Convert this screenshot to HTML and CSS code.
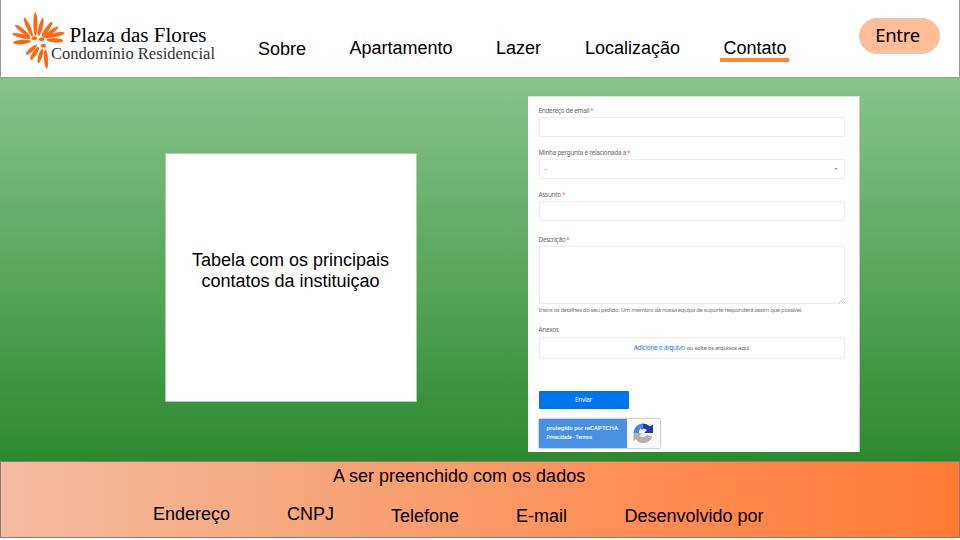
FILE: index.html
```html
<!DOCTYPE html>
<html lang="pt-BR">
<head>
<meta charset="utf-8">
<title>Plaza das Flores</title>
<link rel="stylesheet" href="styles.css">
</head>
<body>
<header class="header">
  <svg class="logo" width="220" height="76" viewBox="0 0 220 76" role="img" aria-label="Plaza das Flores">
    <g transform="scale(.33333)" fill="#fa6a14">
      <ellipse rx="36" ry="6" transform="translate(106 72) rotate(90)"/>
      <ellipse rx="31" ry="6" transform="translate(85 81) rotate(66)"/>
      <ellipse rx="29" ry="6" transform="translate(68 93) rotate(39)"/>
      <ellipse rx="28" ry="6" transform="translate(64 108) rotate(14)"/>
      <ellipse rx="27" ry="6.500" transform="translate(66 126) rotate(-4)"/>
      <ellipse rx="28" ry="6" transform="translate(122 81) rotate(-76)"/>
      <ellipse rx="27" ry="6" transform="translate(141 88) rotate(-55)"/>
      <ellipse rx="28" ry="6" transform="translate(152 97) rotate(-36)"/>
      <ellipse rx="31" ry="6.500" transform="translate(164 105) rotate(-12)"/>
      <ellipse rx="25" ry="6.500" transform="translate(165 121) rotate(3)"/>
      <ellipse rx="22" ry="6" transform="translate(94 149) rotate(-42)"/>
      <ellipse rx="23" ry="6" transform="translate(104 160) rotate(-57)"/>
      <ellipse rx="23" ry="6" transform="translate(121 168) rotate(-73)"/>
      <ellipse rx="29" ry="6" transform="translate(138 177) rotate(86)"/>
      <ellipse rx="8" ry="6" transform="translate(103 115)"/>
      <ellipse rx="8" ry="6" transform="translate(125 118)"/>
      <ellipse rx="8" ry="6" transform="translate(130 137)"/>
    </g>
    <text class="logo-name" x="69.5" y="41.500" textLength="137" lengthAdjust="spacingAndGlyphs">Plaza das Flores</text>
    <text class="logo-sub" x="51" y="59" textLength="164" lengthAdjust="spacingAndGlyphs">Condomínio Residencial</text>
  </svg>
  <nav class="nav">
    <a class="sobre">Sobre</a>
    <a class="apartamento">Apartamento</a>
    <a class="lazer">Lazer</a>
    <a class="local">Localização</a>
    <a class="contato">Contato</a>
  </nav>
  <a class="login">Entre</a>
</header>
<main class="main">
  <section class="contacts"><p>Tabela com os principais<br>contatos da instituiçao</p></section>
  <form class="form">
    <label class="label"><span>Endereço de email</span><i>*</i></label>
    <div class="field"></div>
    <label class="label l2"><span>Minha pergunta é relacionada a</span><i>*</i></label>
    <div class="field select"><span>-</span><span class="caret"></span></div>
    <label class="label l3"><span>Assunto</span><i>*</i></label>
    <div class="field"></div>
    <label class="label l4"><span>Descrição</span><i>*</i></label>
    <div class="field area"><svg width="5" height="5" viewBox="0 0 5 5"><path d="M0 5L5 0M3 5L5 3" stroke="#aaa" stroke-width=".7"/></svg></div>
    <p class="hint">Insira os detalhes do seu pedido. Um membro da nossa equipa de suporte responderá assim que possível.</p>
    <label class="label l5">Anexos</label>
    <div class="field drop"><b>Adicione o arquivo</b><span>ou solte os arquivos aqui</span></div>
    <div class="send">Enviar</div>
    <div class="captcha">
      <div class="captcha-text"><strong>protegido por reCAPTCHA</strong><small>Privacidade - Termos</small></div>
      <svg class="captcha-logo" width="33" height="28" viewBox="0 0 33 28">
        <path d="M6.500 14A9.500 9.500 0 0 1 16 4.500V11L13.500 9.500A6 6 0 0 0 12 14Z" fill="#4a86e8"/>
        <path d="M16 4.500Q20 4.500 23 7.500L26 5.500V14H17L20 11Q18 9.500 16 9.500Z" fill="#1c3aa9"/>
        <path d="M6.500 14H15L12.500 16.500Q16 20 20 16L25.500 18Q22 24 16 24Q11 24 9 20L6.500 22Z" fill="#b0b0b0"/>
      </svg>
    </div>
  </form>
</main>
<footer class="footer">
  <p class="footer-title">A ser preenchido com os dados</p>
  <div class="footer-links">
    <span class="f1">Endereço</span><span class="f2">CNPJ</span><span class="f3">Telefone</span><span class="f4">E-mail</span><span class="f5">Desenvolvido por</span>
  </div>
</footer>
</body>
</html>
```
FILE: styles.css
```css
* { box-sizing: border-box; }
body { margin: 0; width: 960px; height: 540px; overflow: hidden; background: #fff; color: #000; font: 18px/21px "Liberation Sans", Arial, sans-serif; }
p { margin: 0; }
.header { display: flex; align-items: flex-start; height: 78px; border: 1px solid #999; border-top: 0; background: #fff; }
.logo { margin-left: -1px; flex: none; }
.logo-name { font: 20.500px "Liberation Serif", serif; }
.logo-sub { font: 16.500px "Liberation Serif", serif; fill: #333; }
.nav { display: grid; grid-template-columns: 91.5px 146.5px 89px 138.500px 69px; width: 534.500px; margin-left: 38px; padding-top: 38px; align-items: start; }
.nav .sobre { margin-top: 1px; }
.nav .contato { width: 69px; height: 24px; margin-left: -3.500px; padding-left: 3.500px; border-bottom: 4px solid #ff8442; }
.login { width: 81px; height: 36px; margin: 18px 0 0 66.500px; border: 1px solid #d8cbc4; border-radius: 18px; background: #ffbd98; text-align: center; padding-right: 4px; font: 18.500px/31px "Noto Sans", sans-serif; letter-spacing: -.3px; }
.main { display: flex; align-items: flex-start; height: 383px; background: linear-gradient(#87c489, #2c8a2e); }
.contacts { display: flex; align-items: center; justify-content: center; width: 252px; height: 249px; margin: 75px 0 0 165px; padding: 0 1px 14px 0; border: 1px solid #b3cbb3; background: #fff; text-align: center; }
.form { width: 332px; height: 356px; margin: 18px 0 0 111px; padding: 10px 14.500px 0 10.500px; background: #fff; font: 6.300px/8px "Noto Sans", sans-serif; letter-spacing: -.22px; color: #666; border-top: 1px solid #d3ebd3; border-right: 1px solid #b9dcb9; }
.label { display: flex; gap: 1px; height: 8px; line-height: 8px; white-space: nowrap; }
.label i { color: #f66; font-style: normal; }
.field { height: 20px; margin-top: 2px; border: 1px solid #ededed; border-radius: 1px; }
.l2 { margin-top: 12px; }
.l3 { margin-top: 12px; }
.l4 { margin-top: 15px; }
.l5 { margin-top: 12px; }
.select { display: flex; justify-content: space-between; align-items: center; padding: 0 6px 0 5px; }
.caret { width: 3px; height: 2px; background: #999; clip-path: polygon(0 0, 100% 0, 50% 100%); }
.area { height: 58px; display: flex; align-items: flex-end; justify-content: flex-end; }
.hint { margin-top: 2px; white-space: nowrap; color: #777; font-size: 6px; letter-spacing: -.36px; }
.drop { height: 22px; margin-top: 3px; display: flex; gap: 2px; align-items: center; justify-content: center; font-size: 6px; letter-spacing: -.3px; white-space: nowrap; }
.drop b { font-weight: 400; font-size: 6.400px; letter-spacing: -.28px; color: #267bf0; }
.send { width: 90px; height: 18px; margin-top: 32px; border-radius: 1px; background: #0073ee; color: #fff; line-height: 18px; text-align: center; }
.captcha { display: flex; width: 121px; height: 29px; margin-top: 10px; background: #f9f9f9; box-shadow: 0 0 2px #777; letter-spacing: 0; }
.captcha-text { width: 88px; background: #4a90e2; color: #fff; padding: 5px 0 0 8px; font: 6.100px/8px Roboto, sans-serif; white-space: nowrap; }
.captcha-text strong { display: block; font-weight: 500; }
.captcha-text small { display: block; font-size: 5px; line-height: 10px; font-weight: 500; letter-spacing: -.1px; }
.footer { height: 77px; border: 1px solid #917a6d; background: linear-gradient(90deg, #f4bca0, #f6a67b 33%, #ff8d55 67%, #ff7b34); padding-top: 4px; }
.footer-title { padding-left: 332px; }
.footer-links { display: grid; grid-template-columns: 134px 104px 125px 108.500px 145px; align-items: start; padding: 17px 0 0 152px; white-space: nowrap; }
.f3, .f4, .f5 { margin-top: 2px; }
```
